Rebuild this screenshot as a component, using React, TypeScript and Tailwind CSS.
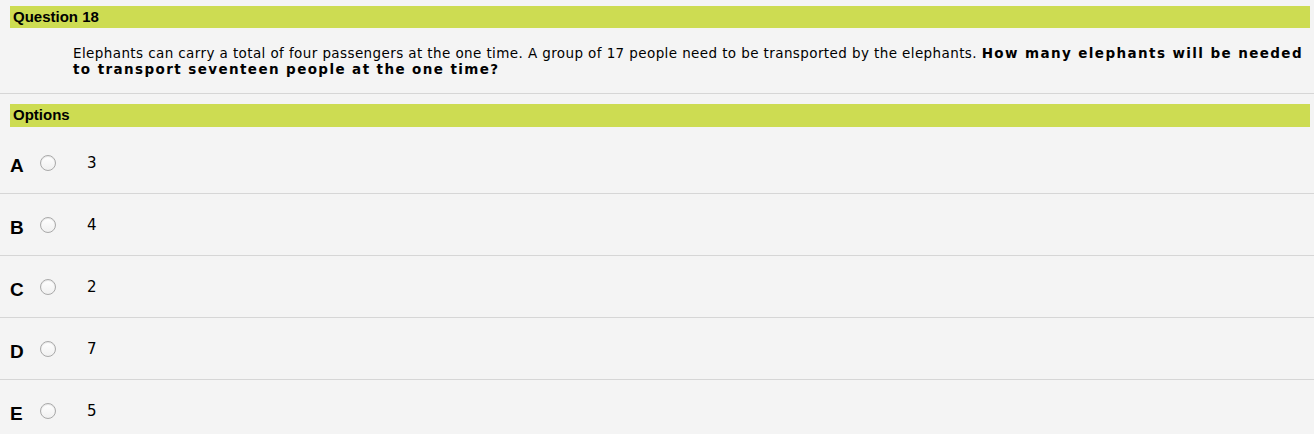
import React from "react";

const options = [
  { letter: "A", value: "3" },
  { letter: "B", value: "4" },
  { letter: "C", value: "2" },
  { letter: "D", value: "7" },
  { letter: "E", value: "5" },
];

function Radio() {
  return (
    <span className="block w-[16px] h-[16px] rounded-full border border-[#a9a9a9] bg-gradient-to-b from-white to-[#f0f0f0] shadow-[inset_0_1px_1px_rgba(0,0,0,0.1)]" />
  );
}

export default function App() {
  return (
    <div className="min-h-screen bg-[#f4f4f4] text-black font-['DejaVu_Sans',Verdana,sans-serif]">
      <div className="pt-[6px] pl-[10px] pr-[4px]">
        <div className="h-[22px] bg-[#cddc52] flex items-center pl-[3px] font-['Liberation_Sans',Arial,sans-serif] font-bold text-[15px]">
          Question 18
        </div>
      </div>

      <p className="pl-[73px] pr-[2px] pt-[17px] pb-[16px] text-[13.5px] tracking-[0.4px] leading-[16px]">
        Elephants can carry a total of four passengers at the one time. A group of 17 people need to be transported by the
        elephants. <b className="tracking-[1.4px]">How many elephants will be needed to transport seventeen people at the one time?</b>
      </p>

      <div className="h-[1px] bg-[#d6d6d6]" />

      <div className="pt-[10px] pl-[10px] pr-[4px]">
        <div className="h-[23px] bg-[#cddc52] flex items-center pl-[3px] font-['Liberation_Sans',Arial,sans-serif] font-bold text-[15px]">
          Options
        </div>
      </div>

      <div className="pt-[5px]">
        {options.map((o, i) => (
          <div key={o.letter}>
            <div className="h-[61px] flex items-center">
              <span className="w-[40px] pl-[10px] pt-[8px] font-['Liberation_Sans',Arial,sans-serif] font-bold text-[19px]">
                {o.letter}
              </span>
              <span className="w-[47px]">
                <Radio />
              </span>
              <span className="text-[15px] pt-[1px]">{o.value}</span>
            </div>
            {i < options.length - 1 && <div className="h-[1px] bg-[#d6d6d6]" />}
          </div>
        ))}
      </div>
    </div>
  );
}
